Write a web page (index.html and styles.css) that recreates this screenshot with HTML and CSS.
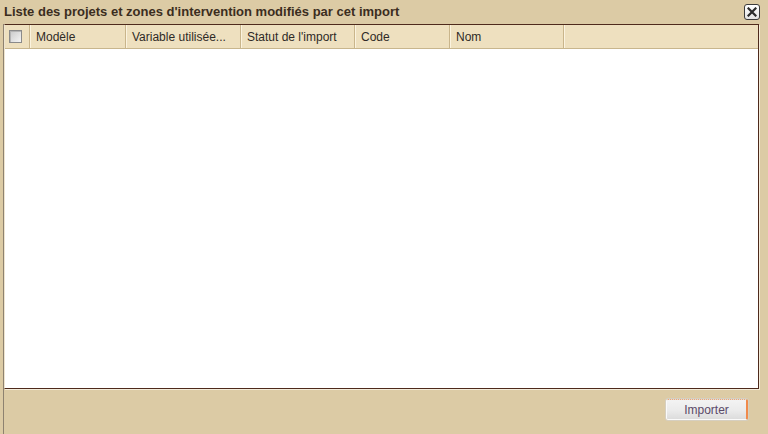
FILE: index.html
```html
<!DOCTYPE html>
<html lang="fr">
<head>
<meta charset="utf-8">
<title>Import</title>
<link rel="stylesheet" href="styles.css">
</head>
<body>
<div class="dialog">
  <div class="titlebar">
    <span class="title">Liste des projets et zones d'intervention modifiés par cet import</span>
    <button class="close" aria-label="Fermer">
      <svg width="10" height="10" viewBox="0 0 10 10"><path d="M1.5 1.5 L8.5 8.5 M8.5 1.5 L1.5 8.5" stroke="#2b2b2b" stroke-width="2.2" stroke-linecap="square"/></svg>
    </button>
  </div>
  <div class="main">
    <div class="grid">
      <div class="header">
        <div class="cell check"><span class="checkbox"></span></div>
        <div class="cell c-modele">Modèle</div>
        <div class="cell c-variable">Variable utilisée...</div>
        <div class="cell c-statut">Statut de l'import</div>
        <div class="cell c-code">Code</div>
        <div class="cell c-nom">Nom</div>
        <div class="cell filler"></div>
      </div>
      <div class="rows"></div>
    </div>
    <div class="footer">
      <button class="btn">Importer</button>
    </div>
  </div>
</div>
</body>
</html>
```
FILE: styles.css
```css
html, body {
  margin: 0;
  padding: 0;
  background: #dccba5;
}
.dialog {
  width: 768px;
  height: 434px;
  display: flex;
  flex-direction: column;
  font-family: "Liberation Sans", Arial, sans-serif;
  overflow: hidden;
}
.titlebar {
  height: 24px;
  flex: none;
  display: flex;
  align-items: center;
  justify-content: space-between;
  padding: 0 8px 0 4px;
  box-sizing: border-box;
}
.title {
  font-weight: bold;
  font-size: 13px;
  color: #3b2d1e;
  margin-top: -2px;
}
.close {
  width: 16px;
  height: 16px;
  padding: 0;
  margin-top: -1px;
  border: 1px solid #3c3c3c;
  border-radius: 3px;
  background: linear-gradient(#ffffff, #e4e4e4);
  display: flex;
  align-items: center;
  justify-content: center;
  box-sizing: border-box;
}
.main {
  flex: 1;
  margin-left: 3px;
  border-left: 1px solid #8e8270;
  display: flex;
  flex-direction: column;
}
.grid {
  margin-right: 9px;
  height: 365px;
  box-sizing: border-box;
  border: 1px solid #4e2a1c;
  border-left: 1px solid #efe5cf;
  background: #ffffff;
  box-shadow: 1px 1px 0 #f4ecda;
  display: flex;
  flex-direction: column;
}
.header {
  height: 24px;
  flex: none;
  display: flex;
  background: #eee0bf;
  border-bottom: 1px solid #c8b68d;
  box-sizing: border-box;
}
.cell {
  box-sizing: border-box;
  font-size: 12px;
  color: #2e2a26;
  display: flex;
  align-items: center;
  padding-left: 5px;
  border-right: 1px solid #c9b58b;
  border-left: 1px solid #fbf3df;
  white-space: nowrap;
}
.check { width: 25px; padding-left: 4px; border-left: none; }
.c-modele { width: 96px; }
.c-variable { width: 115px; }
.c-statut { width: 114px; }
.c-code { width: 95px; }
.c-nom { width: 114px; }
.filler { flex: 1; border-right: none; }
.checkbox {
  width: 13px;
  height: 13px;
  box-sizing: border-box;
  border: 1px solid #8a8a8a;
  background: linear-gradient(135deg, #c9c9c9, #f4f4f4);
  box-shadow: inset 1px 1px 0 #b4b4b4;
}
.rows { flex: 1; }
.footer {
  flex: 1;
  display: flex;
  justify-content: flex-end;
  align-items: flex-start;
  padding: 10px 20px 0 0;
}
.btn {
  width: 82px;
  height: 21px;
  padding: 0;
  font-family: "Liberation Sans", Arial, sans-serif;
  font-size: 12px;
  color: #5a4a68;
  background: linear-gradient(#f3f3f3 0%, #ebebeb 55%, #dcdcdc 100%);
  border: 1px solid #fafafa;
  border-top: 1px dotted #f2a673;
  border-right: 2px solid #f08a4b;
  border-radius: 2px;
  box-shadow: 0 0 0 1px #d6cfc0;
}
```
